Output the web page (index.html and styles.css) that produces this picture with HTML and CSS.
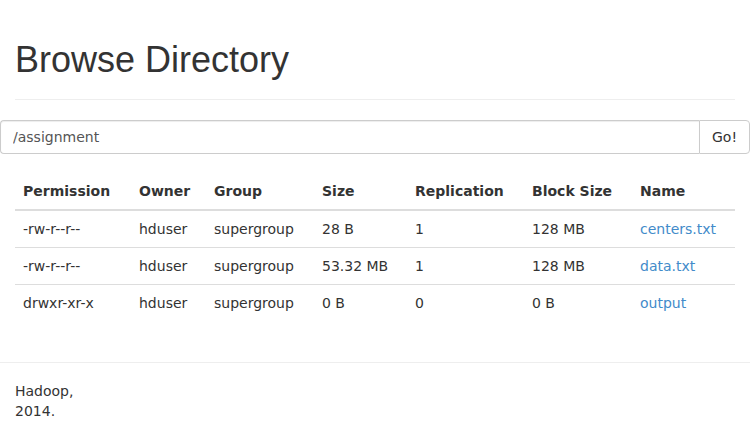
FILE: index.html
```html
<!DOCTYPE html>
<html>
<head>
<meta charset="utf-8">
<title>Browse Directory</title>
<link rel="stylesheet" href="styles.css">
</head>
<body>
<div class="container">
  <div class="page-header">
    <h1>Browse Directory</h1>
  </div>
</div>
<div class="input-group">
  <input class="form-control" type="text" value="/assignment">
  <button class="btn" type="button">Go!</button>
</div>
<div class="container">
  <table class="table">
    <thead>
      <tr>
        <th class="c1">Permission</th>
        <th class="c2">Owner</th>
        <th class="c3">Group</th>
        <th class="c4">Size</th>
        <th class="c5">Replication</th>
        <th class="c6">Block Size</th>
        <th class="c7">Name</th>
      </tr>
    </thead>
    <tbody>
      <tr>
        <td>-rw-r--r--</td><td>hduser</td><td>supergroup</td><td>28 B</td><td>1</td><td>128 MB</td><td><a href="#">centers.txt</a></td>
      </tr>
      <tr>
        <td>-rw-r--r--</td><td>hduser</td><td>supergroup</td><td>53.32 MB</td><td>1</td><td>128 MB</td><td><a href="#">data.txt</a></td>
      </tr>
      <tr>
        <td>drwxr-xr-x</td><td>hduser</td><td>supergroup</td><td>0 B</td><td>0</td><td>0 B</td><td><a href="#">output</a></td>
      </tr>
    </tbody>
  </table>
</div>
<hr class="rule">
<div class="container">
  <p class="footer">Hadoop,<br>2014.</p>
</div>
</body>
</html>
```

FILE: styles.css
```css
html, body {
  margin: 0;
  padding: 0;
}
body {
  font-family: "DejaVu Sans", sans-serif;
  font-size: 14px;
  line-height: 20px;
  color: #333;
  background: #fff;
}
.container {
  padding: 0 15px;
}
.page-header {
  margin: 40px 0 20px;
  padding-bottom: 9px;
  border-bottom: 1px solid #eee;
}
.page-header h1 {
  margin: 0 0 10px;
  font-family: "Liberation Sans", Arial, sans-serif;
  font-size: 36px;
  font-weight: 400;
  line-height: 39.6px;
  color: #333;
}
.input-group {
  display: flex;
  width: 750px;
  height: 34px;
}
.form-control {
  flex: 1;
  min-width: 0;
  box-sizing: border-box;
  height: 34px;
  margin: 0;
  padding: 6px 12px;
  font-family: "DejaVu Sans", sans-serif;
  font-size: 14px;
  color: #555;
  border: 1px solid #ccc;
  border-right: 0;
  border-radius: 4px 0 0 4px;
  box-shadow: inset 0 1px 1px rgba(0,0,0,.075);
  outline: none;
}
.btn {
  box-sizing: border-box;
  height: 34px;
  width: 51px;
  margin: 0;
  padding: 6px 12px;
  font-family: "DejaVu Sans", sans-serif;
  font-size: 14px;
  color: #333;
  background: #fff;
  border: 1px solid #ccc;
  border-radius: 0 4px 4px 0;
}
.table {
  width: 720px;
  margin: 19px 0 20px;
  border-collapse: collapse;
  border-spacing: 0;
  table-layout: fixed;
}
.table th, .table td {
  padding: 8px;
  text-align: left;
  vertical-align: top;
  line-height: 20px;
  white-space: nowrap;
}
.table th {
  font-weight: 700;
  border-bottom: 2px solid #ddd;
}
.table td {
  border-top: 1px solid #ddd;
}
.table tbody tr:first-child td {
  border-top: 0;
}
.c1 { width: 100px; }
.c2 { width: 59px; }
.c3 { width: 92px; }
.c4 { width: 77px; }
.c5 { width: 101px; }
.c6 { width: 92px; }
.c7 { width: 87px; }
a {
  color: #428bca;
  text-decoration: none;
}
.rule {
  margin: 41px 0 18px;
  border: 0;
  border-top: 1px solid #eee;
}
.footer {
  margin: 0;
}
```
